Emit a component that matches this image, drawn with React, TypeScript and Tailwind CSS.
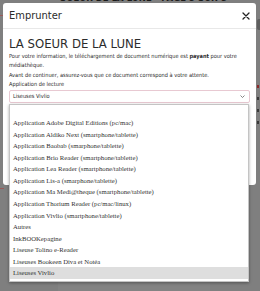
import { useState } from "react";

const options = [
  "",
  "Application Adobe Digital Editions (pc/mac)",
  "Application Aldiko Next (smartphone/tablette)",
  "Application Baobab (smarphone/tablette)",
  "Application Brio Reader (smartphone/tablette)",
  "Application Lea Reader (smartphone/tablette)",
  "Application Lis-a (smarphone/tablette)",
  "Application Ma Medi@theque (smartphone/tablette)",
  "Application Thorium Reader (pc/mac/linux)",
  "Application Vivlio (smartphone/tablette)",
  "Autres",
  "InkBOOKepagine",
  "Liseuse Tolino e-Reader",
  "Liseuses Bookeen Diva et Notéa",
  "Liseuses Vivlio",
];

const ui = "font-['DejaVu_Sans_Condensed','Liberation_Sans_Narrow','Roboto_Condensed',Roboto,sans-serif]";

const CloseIcon = () => (
  <svg width="8" height="8" viewBox="0 0 8 8">
    <path d="M1 1L7 7M7 1L1 7" stroke="#222" strokeWidth="1.3" strokeLinecap="round" />
  </svg>
);

const Chevron = () => (
  <svg width="5" height="3" viewBox="0 0 5 3">
    <path d="M0.5 0.5L2.5 2.5L4.5 0.5" stroke="#666" strokeWidth="0.8" fill="none" />
  </svg>
);

// the page behind the dialog, dimmed by the overlay
const BackgroundPage = () => (
  <div className={`absolute inset-0 flex flex-col ${ui}`}>
    <div className="-mt-[8px] pl-[60px] text-[9.5px] leading-[11px] font-bold text-[#1a1a1a] whitespace-nowrap">
      SOEUR DE LA LUNE - PAGE 5 SUR 8
    </div>
    <div className="mt-[12px] w-[4px] h-px bg-[#9a5a5a]" />
    <div className="flex-1 flex">
      <div className="w-[58px] flex flex-col items-start">
        <div className="mt-[172px] w-[4px] h-px bg-[#9a5a5a]" />
        <div className="mt-[83px] ml-[51px] w-[2px] h-px bg-[#333]" />
      </div>
      <div className="w-[152px] bg-[#838383] flex flex-col">
        <div className="mt-[248px] flex items-start">
          <div className="mt-[5px] ml-[7px] w-[44px] h-[8px] rounded-[1px] bg-[#1e8a3a] text-[4px] leading-[6px] text-[#0c3a18] px-[3px] whitespace-nowrap">
            Document disponible
          </div>
          <div className="ml-[42px] flex flex-col items-start">
            <div className="flex items-center gap-[3px] text-[3.5px] leading-[5px] text-[#222] whitespace-nowrap">
              Sélectionner la notice
              <span className="w-[4px] h-[4px] border-[0.7px] border-[#333] rounded-[1px]" />
            </div>
            <div className="mt-px ml-[21px] w-[22px] h-[6px] bg-[#4a1616]" />
          </div>
        </div>
      </div>
      <div className="flex-1 flex flex-col items-end">
        <div className="mt-[3px] w-[3px] h-[11px] rounded-l-[2px] bg-[#5f5f5f]" />
        <div className="mt-[55px] flex flex-col items-end gap-[9px] pr-px">
          <span className="w-[2px] h-[3px] bg-[#8a2a2a]" />
          <span className="w-[2px] h-[3px] bg-[#3a3a3a]" />
          <span className="w-[2px] h-[3px] bg-[#3a3a3a]" />
          <span className="w-[2px] h-[3px] bg-[#3a3a3a]" />
        </div>
      </div>
    </div>
  </div>
);

export default function App() {
  const [selected] = useState("Liseuses Vivlio");

  return (
    <div className="relative w-[260px] h-[291px] overflow-hidden bg-[#7f7f7f]">
      <BackgroundPage />

      <div className={`absolute left-[3px] top-[3px] w-[253px] h-[182px] bg-white rounded-[3px] text-[#2b2b2b] ${ui}`}>
        <div className="h-[26px] px-[6px] flex items-center justify-between border-b border-[#e8e8e8]">
          <span className="text-[11px] leading-[12px]">Emprunter</span>
          <CloseIcon />
        </div>
        <div className="px-[6px] pt-[7px]">
          <h1 className="text-[13px] leading-[16px]">LA SOEUR DE LA LUNE</h1>
          <p className="text-[5.6px] leading-[9px]">
            Pour votre information, le téléchargement de document numérique est <b>payant</b> pour votre
            <br />
            médiathèque.
          </p>
          <p className="mt-px text-[5.6px] leading-[9px]">
            Avant de continuer, assurez-vous que ce document correspond à votre attente.
          </p>
          <label className="block text-[5.6px] leading-[9px]">Application de lecture</label>
          <div className="mt-[0.5px] h-[13px] border border-[#e8c9d2] rounded-[2px] pl-[3px] pr-[4px] flex items-center justify-between text-[5.6px]">
            <span>{selected}</span>
            <Chevron />
          </div>
        </div>
      </div>

      {/* native select popup */}
      <div className="absolute left-[9px] top-[104px] w-[240px] h-[178px] bg-white border border-[#c4c4c4] shadow-[0_1px_3px_rgba(0,0,0,0.35)] pt-px font-['Liberation_Serif',serif] text-[6.7px] text-[#333]">
        {options.map((o) => (
          <div
            key={o || "empty"}
            className={`h-[11.54px] pl-[3px] flex items-center whitespace-nowrap ${o === selected ? "bg-[#dedede]" : ""}`}
          >
            {o}
          </div>
        ))}
      </div>
    </div>
  );
}
